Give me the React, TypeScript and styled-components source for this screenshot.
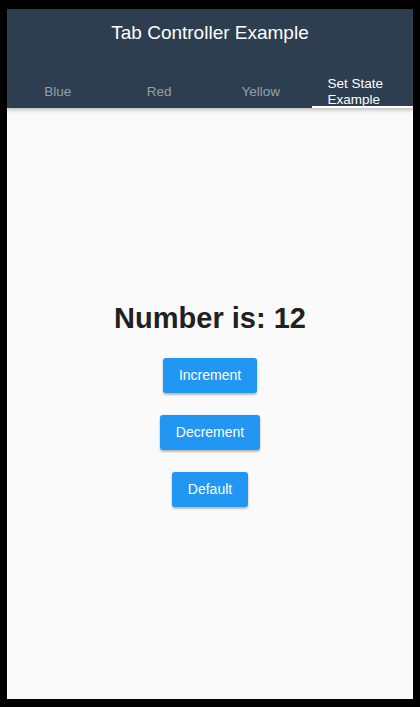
import React, {useState} from "react";
import styled, {createGlobalStyle} from "styled-components";

const GlobalStyle = createGlobalStyle`
  html, body {
    margin: 0;
    padding: 0;
    background: #000;
  }
  body {
    font-family: "Liberation Sans", Arial, sans-serif;
  }
`;

const Frame = styled.div`
  box-sizing: border-box;
  width: 420px;
  height: 707px;
  padding: 9px 7px 8px 7px;
  background: #000;
  display: flex;
`;

const Screen = styled.div`
  flex: 1;
  display: flex;
  flex-direction: column;
  background: #fafafa;
  overflow: hidden;
`;

const Header = styled.header`
  background: #2c3e50;
  box-shadow: 0 2px 4px rgba(0, 0, 0, 0.25);
  position: relative;
  z-index: 1;
`;

const Title = styled.h1`
  margin: 0;
  height: 48px;
  display: flex;
  align-items: center;
  justify-content: center;
  color: #fff;
  font-size: 19px;
  font-weight: 400;
`;

const TabBar = styled.nav`
  display: grid;
  grid-template-columns: repeat(4, 1fr);
  height: 51px;
`;

const Tab = styled.button<{ $active?: boolean }>`
  appearance: none;
  border: none;
  background: transparent;
  font-family: inherit;
  padding: 19px 16px 0;
  min-width: 0;
  display: flex;
  align-items: center;
  justify-content: center;
  position: relative;
  color: ${({$active}) => ($active ? "#fff" : "rgba(255, 255, 255, 0.5)")};
  font-size: 13.5px;
  line-height: 16px;
  cursor: pointer;

  &::after {
    content: "";
    position: absolute;
    left: 0;
    right: 0;
    bottom: 0;
    height: 2px;
    background: ${({$active}) => ($active ? "#fff" : "transparent")};
  }
`;

const TabLabel = styled.span`
  display: inline-block;
  text-align: left;
`;

const Body = styled.main`
  flex: 1;
  display: flex;
  flex-direction: column;
  align-items: center;
  justify-content: center;
`;

const Count = styled.h2`
  margin: 0 0 23px;
  color: #212121;
  font-size: 29px;
  font-weight: 700;
  line-height: 34px;
`;

const ActionButton = styled.button`
  appearance: none;
  border: none;
  background: #2196f3;
  color: #fff;
  font-family: inherit;
  font-size: 14px;
  height: 35px;
  padding: 0 16px;
  border-radius: 3px;
  box-shadow: 0 2px 2px rgba(0, 0, 0, 0.24), 0 0 2px rgba(0, 0, 0, 0.12);
  cursor: pointer;

  & + & {
    margin-top: 22px;
  }
`;

const tabs = ["Blue", "Red", "Yellow", "Set State Example"];

export default function App() {
    const [active, setActive] = useState(3);
    const [count, setCount] = useState(12);

    return (
        <>
            <GlobalStyle/>
            <Frame>
                <Screen>
                    <Header>
                        <Title>Tab Controller Example</Title>
                        <TabBar>
                            {tabs.map((t, i) => (
                                <Tab key={t} $active={i === active} onClick={() => setActive(i)}>
                                    <TabLabel>{t}</TabLabel>
                                </Tab>
                            ))}
                        </TabBar>
                    </Header>
                    <Body>
                        <Count>Number is: {count}</Count>
                        <ActionButton onClick={() => setCount(count + 1)}>Increment</ActionButton>
                        <ActionButton onClick={() => setCount(count - 1)}>Decrement</ActionButton>
                        <ActionButton onClick={() => setCount(12)}>Default</ActionButton>
                    </Body>
                </Screen>
            </Frame>
        </>
    );
}
